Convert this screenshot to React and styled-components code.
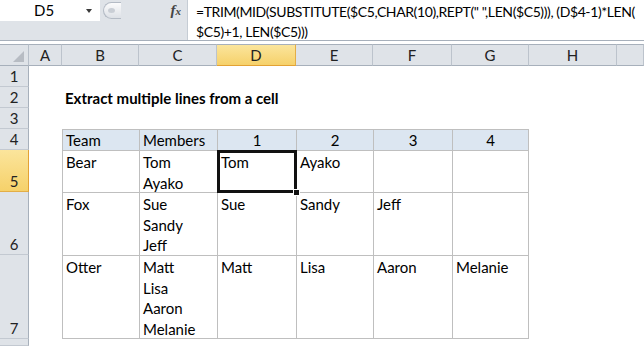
import React from 'react';
import styled, { createGlobalStyle, css } from 'styled-components';

const GlobalStyle = createGlobalStyle`
	body {
		margin: 0;
		background: #fff;
		font-family: Lato, 'Liberation Sans', sans-serif;
	}
`;

const Window = styled.div`
	width: 644px;
	height: 346px;
	overflow: hidden;
	display: flex;
	flex-direction: column;
	background: #fff;
	font-size: 15px;
	color: #000;
`;

const FormulaBar = styled.div`
	display: flex;
	height: 41px;
	box-sizing: border-box;
	background: #dfe3e8;
	border-bottom: 1px solid #a7b0bb;
	overflow: hidden;
`;
const LeftTools = styled.div`
	width: 187px;
	flex-shrink: 0;
	display: flex;
	align-items: flex-start;
`;
const NameBox = styled.div`
	width: 100px;
	height: 21px;
	background: #fff;
	display: flex;
	align-items: center;
	box-sizing: border-box;
	padding-left: 34px;
`;
const NameText = styled.span`
	flex: 1;
	line-height: 21px;
`;
const Caret = styled.span`
	width: 0;
	height: 0;
	margin-right: 8px;
	border-style: solid;
	border-width: 4px 3px 0 3px;
	border-color: #3a3a3a transparent transparent transparent;
`;
const Grip = styled.div`
	margin: 2px 0 0 3px;
	width: 18px;
	height: 17px;
	box-sizing: border-box;
	border: 1px solid #b4bbc5;
	border-right: none;
	border-radius: 9px 0 0 9px;
	background: linear-gradient(#fbfbfc, #dde1e6);
	display: flex;
	align-items: center;
	padding-left: 4px;

	&::before {
		content: '';
		width: 7px;
		height: 5px;
		border-radius: 50%;
		background: #c9ced5;
	}
`;
const Fx = styled.span`
	margin: 0 6px 0 auto;
	line-height: 21px;
	font-family: 'Liberation Serif', serif;
	font-style: italic;
	font-weight: bold;
	font-size: 15px;
	color: #444;

	sub {
		font-size: 11px;
		vertical-align: 0;
	}
`;
const FormulaBox = styled.div`
	flex: 1;
	min-width: 0;
	background: #fff;
	border-left: 1px solid #c5ccd4;
	padding: 2px 0 0 8px;
	line-height: 20px;
	font-size: 14px;
	letter-spacing: -0.4px;
	white-space: nowrap;
`;
const Gap = styled.div`
	height: 3px;
	background: #fff;
`;

const Sheet = styled.div`
	flex: 1;
	display: grid;
	grid-template-columns: 29px 33px 77px 78px 79px 77px 79px 77px 88px 1fr;
	grid-template-rows: 22px 21px 21px 21px 21px 42px 63px 84px 1fr;
`;

const headerBase = css`
	box-sizing: border-box;
	background: ${(p) => (p.$active ? 'linear-gradient(#fbe59c, #f6d16a)' : '#dfe3e8')};
	color: #222;
	display: flex;
	justify-content: center;
	line-height: 20px;
`;
const Corner = styled.div`
	${headerBase};
	border-top: 1px solid #a7b0bb;
	border-right: 1px solid #b7bfc9;
	border-bottom: 1px solid #a7b0bb;
	justify-content: flex-end;
	align-items: flex-end;
	padding: 0 4px 3px 0;

	&::before {
		content: '';
		border-style: solid;
		border-width: 0 0 11px 11px;
		border-color: transparent transparent #b7bcc3 transparent;
	}
`;
const ColHead = styled.div`
	${headerBase};
	align-items: center;
	border-top: 1px solid #a7b0bb;
	border-right: 1px solid ${(p) => (p.$active ? '#e3ae47' : '#bcc3cc')};
	border-bottom: 1px solid ${(p) => (p.$active ? '#e3a234' : '#a7b0bb')};
`;
const RowHead = styled.div`
	${headerBase};
	align-items: flex-end;
	border-right: 1px solid ${(p) => (p.$active ? '#e3a234' : '#a7b0bb')};
	border-bottom: 1px solid ${(p) => (p.$active ? '#e3ae47' : '#c3c9d1')};
`;

const Cell = styled.div`
	position: relative;
	min-width: 0;
	box-sizing: border-box;
	padding: 0 3px;
	line-height: 20.5px;
	white-space: nowrap;
	display: flex;
	flex-direction: column;
	justify-content: ${(p) => (p.$bottom ? 'flex-end' : 'flex-start')};
	align-items: ${(p) => (p.$center ? 'center' : 'flex-start')};
	font-weight: ${(p) => (p.$bold ? 'bold' : 'normal')};
	background: ${(p) => (p.$head ? '#dce6f1' : 'transparent')};
	${(p) =>
		p.$table &&
		css`
			border-left: 1px solid #bfbfbf;
			border-top: 1px solid #bfbfbf;
		`}
	${(p) => p.$lastCol && 'border-right: 1px solid #bfbfbf;'}
	${(p) => p.$lastRow && 'border-bottom: 1px solid #bfbfbf;'}
	${(p) => !p.$bottom && 'padding-top: 1px;'}
	${(p) =>
		p.$selected &&
		css`
			&::after {
				content: '';
				position: absolute;
				top: -1px;
				left: -1px;
				right: -1px;
				bottom: -1px;
				border: 3px solid #111;
				z-index: 2;
			}
			&::before {
				content: '';
				position: absolute;
				right: -4px;
				bottom: -4px;
				width: 5px;
				height: 5px;
				background: #111;
				border: 1px solid #fff;
				z-index: 3;
			}
		`}
`;

const columns = ['A', 'B', 'C', 'D', 'E', 'F', 'G', 'H', ''];
const rowNumbers = ['1', '2', '3', '4', '5', '6', '7', ''];

const teams = [
	{ team: 'Bear', members: ['Tom', 'Ayako'] },
	{ team: 'Fox', members: ['Sue', 'Sandy', 'Jeff'] },
	{ team: 'Otter', members: ['Matt', 'Lisa', 'Aaron', 'Melanie'] },
];

function Blank() {
	return <Cell />;
}

function App() {
	const rows = [];

	rows.push(
		<React.Fragment key='h'>
			<Corner />
			{columns.map((c) => (
				<ColHead key={c || 'x'} $active={c === 'D'}>
					{c}
				</ColHead>
			))}
		</React.Fragment>,
	);

	rowNumbers.forEach((n) => {
		const cells = [];
		if (n === '2') {
			cells.push(<Blank key='a' />);
			cells.push(
				<Cell key='b' $bottom $bold>
					Extract multiple lines from a cell
				</Cell>,
			);
			for (let i = 0; i < 7; i += 1) cells.push(<Blank key={i} />);
		} else if (n === '4') {
			cells.push(<Blank key='a' />);
			cells.push(
				<Cell key='b' $table $head $bottom>
					Team
				</Cell>,
			);
			cells.push(
				<Cell key='c' $table $head $bottom>
					Members
				</Cell>,
			);
			[1, 2, 3, 4].forEach((k) => {
				cells.push(
					<Cell key={k} $table $head $bottom $center $lastCol={k === 4}>
						{k}
					</Cell>,
				);
			});
			cells.push(<Blank key='h' />, <Blank key='i' />);
		} else if (['5', '6', '7'].includes(n)) {
			const t = teams[Number(n) - 5];
			const last = n === '7';
			cells.push(<Blank key='a' />);
			cells.push(
				<Cell key='b' $table $lastRow={last}>
					{t.team}
				</Cell>,
			);
			cells.push(
				<Cell key='c' $table $lastRow={last}>
					{t.members.map((m) => (
						<span key={m}>{m}</span>
					))}
				</Cell>,
			);
			[0, 1, 2, 3].forEach((k) => {
				cells.push(
					<Cell
						key={k}
						$table
						$lastRow={last}
						$lastCol={k === 3}
						$selected={n === '5' && k === 0}
					>
						{t.members[k] || ''}
					</Cell>,
				);
			});
			cells.push(<Blank key='h' />, <Blank key='i' />);
		} else {
			for (let i = 0; i < 9; i += 1) cells.push(<Blank key={i} />);
		}
		rows.push(
			<React.Fragment key={`r${n || 'x'}`}>
				<RowHead $active={n === '5'}>{n}</RowHead>
				{cells}
			</React.Fragment>,
		);
	});

	return (
		<Window>
			<GlobalStyle />
			<FormulaBar>
				<LeftTools>
					<NameBox>
						<NameText>D5</NameText>
						<Caret />
					</NameBox>
					<Grip />
					<Fx>
						f<sub>x</sub>
					</Fx>
				</LeftTools>
				<FormulaBox>
					=TRIM(MID(SUBSTITUTE($C5,CHAR(10),REPT(&quot; &quot;,LEN($C5))), (D$4-1)*LEN(
					<br />
					$C5)+1, LEN($C5)))
				</FormulaBox>
			</FormulaBar>
			<Gap />
			<Sheet>{rows}</Sheet>
		</Window>
	);
}

export default App;
